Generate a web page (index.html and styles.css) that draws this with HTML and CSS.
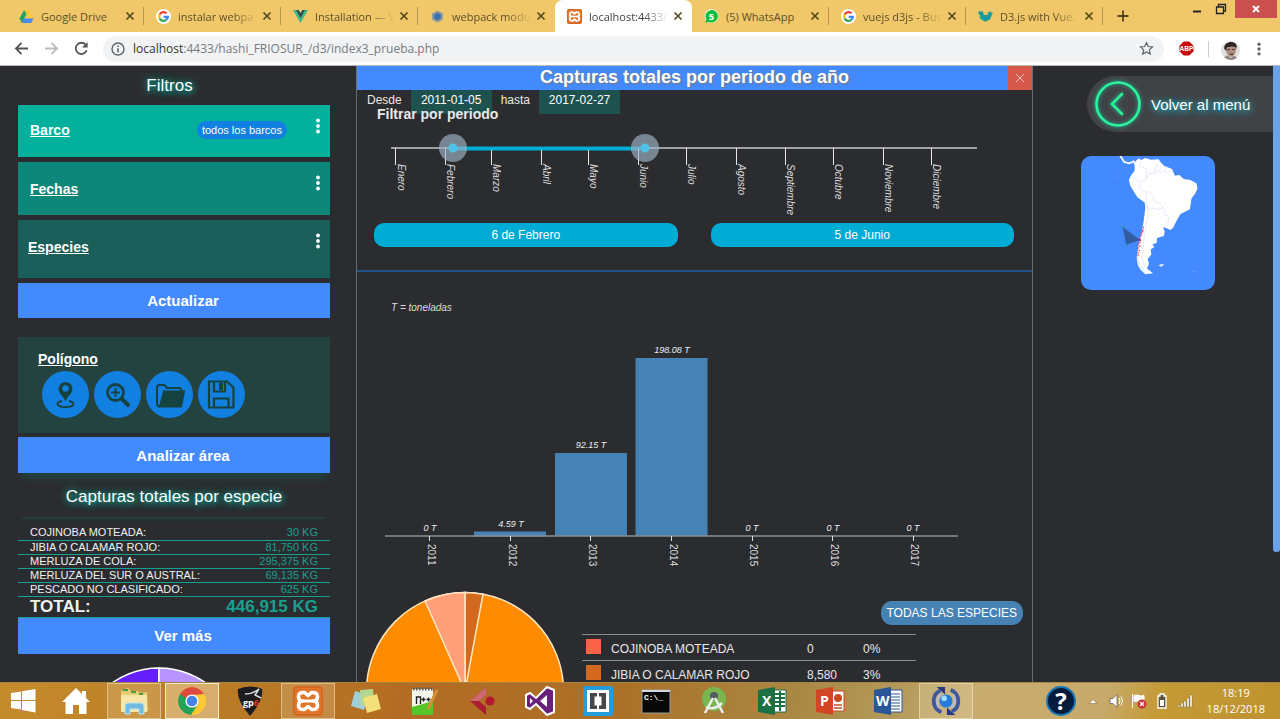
FILE: index.html
```html
<!DOCTYPE html>
<html lang="es">
<head>
<meta charset="utf-8">
<title>localhost:4433/hashi_FRIOSUR_/d3/index3_prueba.php</title>
<link rel="stylesheet" href="styles.css">
</head>
<body>
<svg class="defs" width="0" height="0" aria-hidden="true">
  <symbol id="x" viewBox="0 0 10 10"><path d="M1.500 1.500 8.500 8.500M8.500 1.500 1.500 8.500" stroke="currentColor" stroke-width="1.700"/></symbol>
  <symbol id="google" viewBox="0 0 16 16"><circle cx="8" cy="8" r="8" fill="#fff"/><g fill="none" stroke-width="2.400"><path d="M11.300 4.600A4.700 4.700 0 0 0 3.900 5.700" stroke="#ea4335"/><path d="M3.900 5.700a4.700 4.700 0 0 0 0 4.600" stroke="#fbbc05"/><path d="M3.900 10.300a4.700 4.700 0 0 0 7 1.400" stroke="#34a853"/><path d="M10.900 11.700A4.700 4.700 0 0 0 12.700 8.300H8.200" stroke="#4285f4"/></g></symbol>
  <symbol id="xampp" viewBox="0 0 30 30"><rect x="0" y="0" width="30" height="30" rx="4" fill="#e0762c"/><rect x="1" y="1" width="28" height="28" rx="3" fill="none" stroke="#c75c16"/><g fill="none" stroke="#fff" stroke-width="3.600" stroke-linejoin="round"><path d="M11.500 6.500Q5.500 6 5.500 10.500T9.500 15Q5.500 15 5.500 19.500T11.500 23.500L15 20.500 18.500 23.500Q24.500 24 24.500 19.500T20.500 15Q24.500 15 24.500 10.500T18.500 6.500L15 9.500z"/><path d="M10 15h10" stroke-width="3"/></g></symbol>
  <symbol id="dots" viewBox="0 0 4 16"><g fill="currentColor"><circle cx="2" cy="2.500" r="1.900"/><circle cx="2" cy="8" r="1.900"/><circle cx="2" cy="13.500" r="1.900"/></g></symbol>
</svg>

<header class="browser">
  <div class="tabstrip">
    <nav class="tabs" aria-label="Pestañas">
      <div class="tab"><svg class="fav" viewBox="0 0 16 16"><path d="M5.500 1h5l5 9h-5z" fill="#fbc734"/><path d="M5.500 1 8 5.500 3 15 .5 10z" fill="#1da462"/><path d="M5.500 10h10L13 15H3z" fill="#4688f4"/></svg><a class="tab-title" href="#">Google Drive</a><button class="tab-x" aria-label="Cerrar"><svg><use href="#x"/></svg></button></div>
      <div class="tab"><svg class="fav"><use href="#google"/></svg><a class="tab-title fade" href="#">instalar webpa</a><button class="tab-x" aria-label="Cerrar"><svg><use href="#x"/></svg></button></div>
      <div class="tab"><svg class="fav" viewBox="0 0 16 16"><path d="M0 1h6l2 3.500L10 1h6L8 15z" fill="#41b883"/><path d="M3.200 1H6l2 3.500L10 1h2.800L8 9.500z" fill="#35495e"/></svg><a class="tab-title fade" href="#">Installation — V</a><button class="tab-x" aria-label="Cerrar"><svg><use href="#x"/></svg></button></div>
      <div class="tab"><svg class="fav" viewBox="0 0 16 16"><path d="m8 1.500 5.800 3.200v6.600L8 14.500l-5.800-3.200V4.700z" fill="#8a9a9c"/><path d="m8 4 3.500 2v4L8 12l-3.500-2V6z" fill="#3a72b0"/></svg><a class="tab-title fade" href="#">webpack modu</a><button class="tab-x" aria-label="Cerrar"><svg><use href="#x"/></svg></button></div>
      <div class="tab active"><svg class="fav"><use href="#xampp"/></svg><a class="tab-title fade" href="#">localhost:4433/</a><button class="tab-x" aria-label="Cerrar"><svg><use href="#x"/></svg></button></div>
      <div class="tab"><svg class="fav" viewBox="0 0 16 16"><circle cx="8" cy="7.500" r="7.500" fill="#e8f3dc"/><path d="M1.500 15 2.500 11A6.600 6.600 0 1 1 5 13.500z" fill="#0bbf3c"/><text class="fav-num" x="8" y="11.500">5</text></svg><a class="tab-title" href="#">(5) WhatsApp</a><button class="tab-x" aria-label="Cerrar"><svg><use href="#x"/></svg></button></div>
      <div class="tab"><svg class="fav"><use href="#google"/></svg><a class="tab-title fade" href="#">vuejs d3js - Bus</a><button class="tab-x" aria-label="Cerrar"><svg><use href="#x"/></svg></button></div>
      <div class="tab"><svg class="fav" viewBox="0 0 16 16"><path d="M0 3l2.500-.5L5 2.500l1.500 4 3.500 0 1-3 2-1 1.500 1.500L16 4l-1.500 3L13 11l-5 2.500L3 11 1 8l2 .3L1 5.500z" fill="#1c9c9c"/></svg><a class="tab-title fade" href="#">D3.js with Vue.</a><button class="tab-x" aria-label="Cerrar"><svg><use href="#x"/></svg></button></div>
    </nav>
    <button class="new-tab" aria-label="Nueva pestaña"><svg viewBox="0 0 12 12"><path d="M6 .5v11M.5 6h11" stroke="#54481f" stroke-width="1.800"/></svg></button>
    <div class="window-buttons">
      <button aria-label="Minimizar"><svg viewBox="0 0 12 12"><path d="M2 8.500h8" stroke="#222" stroke-width="2"/></svg></button>
      <button aria-label="Restaurar"><svg viewBox="0 0 12 12"><path d="M1.500 4h7v6.500h-7zM3.500 3.500v-2h7v6.500H9" fill="none" stroke="#222" stroke-width="1.300"/></svg></button>
      <button class="win-close" aria-label="Cerrar ventana"><svg viewBox="0 0 12 12"><path d="m3 3 6 6M9 3 3 9" stroke="#fff" stroke-width="1.800"/></svg></button>
    </div>
  </div>
  <div class="toolbar">
    <button aria-label="Atrás"><svg viewBox="0 0 16 16"><path d="M15 8H2M8 2 2 8l6 6" fill="none" stroke="#555" stroke-width="1.900"/></svg></button>
    <button aria-label="Adelante"><svg viewBox="0 0 16 16"><path d="M1 8h13M8 2l6 6-6 6" fill="none" stroke="#bbb" stroke-width="1.900"/></svg></button>
    <button aria-label="Recargar"><svg viewBox="0 0 16 16"><path d="M13.500 10A6 6 0 1 1 12.500 4" fill="none" stroke="#555" stroke-width="1.900"/><path d="M14.500 1v6h-6z" fill="#555"/></svg></button>
    <div class="address">
      <svg viewBox="0 0 14 14"><circle cx="7" cy="7" r="6" fill="none" stroke="#5f6368" stroke-width="1.400"/><path d="M7 6.200v4.200M7 3.600v1.500" stroke="#5f6368" stroke-width="1.500"/></svg>
      <span class="url" role="textbox" aria-label="Dirección">localhost<span class="path">:4433/hashi_FRIOSUR_/d3/index3_prueba.php</span></span>
      <svg class="star" viewBox="0 0 16 16"><path d="m8 1.800 1.900 4.100 4.500.5L11 9.500l1 4.500-4-2.300L4 14l1-4.500L1.600 6.400l4.500-.5z" fill="none" stroke="#5f6368" stroke-width="1.300"/></svg>
    </div>
    <button class="abp" aria-label="Adblock Plus"><svg viewBox="0 0 16 16"><path d="M5 .5h6L15.500 5v6L11 15.500H5L.5 11V5z" fill="#c70d0c"/><text class="abp-text" x="8" y="10.500">ABP</text></svg></button>
    <button class="avatar" aria-label="Perfil"><svg viewBox="0 0 18 18"><circle cx="9" cy="9" r="9" fill="#e3dfdd"/><path d="M3 7C3 0 14-1 15 5l-1 4-1-3-7 0-1 4z" fill="#2d2526"/><path d="M5 7l5-2 4 1v5l-3 4H8l-3-4z" fill="#b08d80"/><path d="M6 8h2.500m2 0H13M8 12.500h4" stroke="#3b2f2f"/><path d="M3 15.500l3-2 3 2.500 4-2 2 2q-6 4-12-.500z" fill="#8d8382"/></svg></button>
    <button class="more" aria-label="Menú"><svg><use href="#dots"/></svg></button>
  </div>
</header>

<main class="page">
  <aside class="sidebar">
    <h2 class="side-title filters-title">Filtros</h2>
    <section class="filters">
      <div class="filter boat"><a href="#">Barco</a><span class="badge">todos los barcos</span><button aria-label="Opciones de barco"><svg><use href="#dots"/></svg></button></div>
      <div class="filter dates"><a href="#">Fechas</a><button aria-label="Opciones de fechas"><svg><use href="#dots"/></svg></button></div>
      <div class="filter species"><a href="#">Especies</a><button aria-label="Opciones de especies"><svg><use href="#dots"/></svg></button></div>
      <button class="action">Actualizar</button>
    </section>
    <section class="area">
      <div class="polygon">
        <a href="#">Polígono</a>
        <div class="tools">
          <button aria-label="Marcar"><svg viewBox="0 0 47 47"><path d="M23.500 11a7 7 0 0 1 7 7c0 4-4.500 7-7 12-2.500-5-7-8-7-12a7 7 0 0 1 7-7z" fill="#16423f"/><circle cx="23.500" cy="17.500" r="3.200" fill="#1280e0"/><path d="M20 30c-7 1.500-6 6 3.500 6s10.500-4.500 3.500-6" fill="none" stroke="#16423f" stroke-width="2"/></svg></button>
          <button aria-label="Acercar"><svg viewBox="0 0 47 47" fill="none" stroke="#16423f"><circle cx="21.500" cy="21.500" r="8" stroke-width="2.800"/><path d="M21.500 17v9M17 21.500h9" stroke-width="2"/><path d="m28 28 6 6" stroke-width="4" stroke-linecap="round"/></svg></button>
          <button aria-label="Abrir"><svg viewBox="0 0 47 47" fill="none" stroke="#16423f" stroke-width="2"><path d="M14 35.500q-3 0-3-3v-16q0-2.500 2.500-2.500h5l2.500 3h12q2.500 0 2.500 3v1"/><path d="M18 20.500h20l-3 15H14z" fill="#16423f"/></svg></button>
          <button aria-label="Guardar"><svg viewBox="0 0 47 47" fill="none" stroke="#16423f" stroke-width="2.200"><path d="M11 10.500h18l6.500 6V36.500H11zM16 10.500v10h11v-10M16 36.500v-9h14.500v9"/><path d="M21 12h4v7h-4z" fill="#16423f" stroke="none"/></svg></button>
        </div>
      </div>
      <button class="action">Analizar área</button>
    </section>
    <h2 class="side-title totals-title">Capturas totales por especie</h2>
    <table class="totals">
      <tbody>
        <tr><th scope="row">COJINOBA MOTEADA:</th><td>30 KG</td></tr>
        <tr><th scope="row">JIBIA O CALAMAR ROJO:</th><td>81,750 KG</td></tr>
        <tr><th scope="row">MERLUZA DE COLA:</th><td>295,375 KG</td></tr>
        <tr><th scope="row">MERLUZA DEL SUR O AUSTRAL:</th><td>69,135 KG</td></tr>
        <tr><th scope="row">PESCADO NO CLASIFICADO:</th><td>625 KG</td></tr>
      </tbody>
      <tfoot><tr><th scope="row">TOTAL:</th><td>446,915 KG</td></tr></tfoot>
    </table>
    <button class="action">Ver más</button>
    <svg class="mini-pie" viewBox="0 0 164 164"><g stroke="#fff" stroke-width="1.500"><path d="M82 82V1a81 81 0 0 0 0 162z" fill="#651fff"/><path d="M82 82V1a81 81 0 0 1 0 162z" fill="#b794ff"/></g></svg>
  </aside>

  <section class="panel">
    <header class="panel-head"><h1>Capturas totales por periodo de año</h1><button aria-label="Cerrar panel"><svg viewBox="0 0 12 12"><path d="m1 1 10 10M11 1 1 11" stroke="#f3d7d3" stroke-width="1"/></svg></button></header>
    <div class="range-dates">
      <label for="from">Desde</label><input id="from" type="text" value="2011-01-05">
      <label for="to">hasta</label><input id="to" type="text" value="2017-02-27">
    </div>
    <h3 class="period-title">Filtrar por periodo</h3>
    <div class="slider">
      <svg class="months" viewBox="0 0 675 95">
        <path d="M34 24h586" stroke="#9d9fa1" stroke-width="2"/>
        <path d="M95 24.500h193" stroke="#00acd4" stroke-width="4"/>
        <path d="M38.500 24v17M88.500 24v17M134.500 26v15M184.500 26v15M231.500 26v15M281.500 24v17M329.500 24v17M379.500 24v17M428.500 24v17M476.500 24v17M526.500 24v17M574.500 24v17" stroke="#e6e6e6" stroke-width="1"/>
        <g class="month-label">
          <text transform="translate(41 40) rotate(90)">Enero</text><text transform="translate(90 40) rotate(90)">Febrero</text><text transform="translate(136 40) rotate(90)">Marzo</text><text transform="translate(186 40) rotate(90)">Abril</text><text transform="translate(233 40) rotate(90)">Mayo</text><text transform="translate(283 40) rotate(90)">Junio</text><text transform="translate(331 40) rotate(90)">Julio</text><text transform="translate(381 40) rotate(90)">Agosto</text><text transform="translate(430 40) rotate(90)">Septiembre</text><text transform="translate(478 40) rotate(90)">Octubre</text><text transform="translate(528 40) rotate(90)">Noviembre</text><text transform="translate(576 40) rotate(90)">Diciembre</text>
        </g>
      </svg>
      <input type="range" min="0" max="1000" value="105" aria-label="Inicio del periodo">
      <input type="range" min="0" max="1000" value="434" aria-label="Fin del periodo">
    </div>
    <div class="period-pills"><output>6 de Febrero</output><output>5 de Junio</output></div>
    <svg class="bars" viewBox="0 0 675 300">
      <text class="unit" x="34" y="39">T = toneladas</text>
      <g fill="#4682b4"><path d="M117 259.500h72v5h-72zM198 181h72v83h-72zM278.500 86h72v178h-72z"/></g>
      <path d="M28 264h573" stroke="#8d8f92" stroke-width="1.500"/>
      <path d="M72.500 264v5M153.500 264v5M233.500 264v5M314.500 264v5M395.500 264v5M475.500 264v5M556.500 264v5" stroke="#e0e0e0"/>
      <g class="bar-value"><text x="73" y="259">0 T</text><text x="154" y="255">4.59 T</text><text x="234" y="176">92.15 T</text><text x="315" y="81">198.08 T</text><text x="395" y="259">0 T</text><text x="476" y="259">0 T</text><text x="556" y="259">0 T</text></g>
      <g class="year"><text transform="translate(71 272) rotate(90)">2011</text><text transform="translate(152 272) rotate(90)">2012</text><text transform="translate(232 272) rotate(90)">2013</text><text transform="translate(313 272) rotate(90)">2014</text><text transform="translate(393 272) rotate(90)">2015</text><text transform="translate(474 272) rotate(90)">2016</text><text transform="translate(554 272) rotate(90)">2017</text></g>
    </svg>
    <div class="breakdown">
      <svg class="pie" viewBox="0 0 200 200"><g stroke="#ffe7c4" stroke-width="1.500"><circle cx="100" cy="100" r="98.500" fill="#ff8c00"/><path d="M100 100V1.500A98.500 98.500 0 0 1 118 3.200z" fill="#d2691e"/><path d="M100 100 60 10A98.500 98.500 0 0 1 100 1.500z" fill="#ffa07a"/></g></svg>
      <div class="legend">
        <button class="all-species">TODAS LAS ESPECIES</button>
        <table>
          <tbody>
            <tr><td><span class="swatch tomato"></span></td><td>COJINOBA MOTEADA</td><td>0</td><td>0%</td></tr>
            <tr><td><span class="swatch chocolate"></span></td><td>JIBIA O CALAMAR ROJO</td><td>8,580</td><td>3%</td></tr>
          </tbody>
        </table>
      </div>
    </div>
  </section>

  <aside class="right">
    <a class="back" href="#"><svg viewBox="0 0 56 56" fill="none" stroke="#2bf39b" stroke-width="2.600"><circle cx="31" cy="28" r="21.500"/><path d="m35 18-10 10 10 10" stroke-linecap="round"/></svg>Volver al menú</a>
    <svg class="map" viewBox="153 276 400 400" role="img" aria-label="Mapa de Sudamérica">
      <path d="M268 272l14 22 16 4 12-6 6 10" fill="none" stroke="#fff" stroke-width="5"/>
      <path d="M313 303 316 292 325 283 333 288 345 282 362 287 385 286 392 296 402 306 425 315 433 335 446 333 460 345 480 348 498 358 501 374 492 391 483 402 478 435 462 443 450 449 438 470 428 490 420 497 412 493 398 488 403 502 400 515 380 521 379 535 366 540 372 548 361 555 363 570 352 584 356 598 350 612 368 626 345 629 330 615 322 600 319 580 325 540 334 505 340 470 345 430 343 415 322 400 312 384 300 365 296 348 303 333 313 320z" fill="#fff"/>
      <g fill="none" stroke="#d6d8f5" stroke-width="1.700"><path d="M332 290l-2 17 18 8 2 28-18 10-4 18 20 14 7-4 12 12 4 18 18 8 12 18 2 13 12 8-2 13-14 17-3 10"/><path d="M346 343l10-14 18-2 1-17 10-10M376 320l14 4 12-3 10 6 12-10M390 305l-2 15M408 307l-4 13M300 337l17 8 13 8M347 385l1 35 10 16 14-4 17 4 10-10M350 425l5 22-8 35-8 60-4 40 8 25"/></g>
      <path d="M340 487l-3 9 3 5-8 3 3 7-7 8 4 12-8 6 5 8-6 6 4 8-5 8 3 9" fill="none" stroke="#f05262" stroke-width="4" stroke-dasharray="5 3"/>
      <path d="M321 575l4 18 7 14 10 13" fill="none" stroke="#8db3fa" stroke-width="2" stroke-dasharray="3 2"/>
      <path d="M277 487 329 527 288 541z" fill="#315da0"/><path d="M276 486l4 4M287 539l4 4" stroke="#1aa64f" stroke-width="4"/><circle cx="327" cy="526" r="4" fill="#7b3bb0"/>
      <path d="M385 603l7-4 9 1-8 6zM488 620l8 2" fill="#fff" stroke="#b8d0ff"/><circle cx="252" cy="336" r="2" fill="#8db6ff"/>
    </svg>
  </aside>
  <div class="scrollbar"></div>
</main>

<footer class="taskbar">
  <button class="start" aria-label="Inicio"><svg viewBox="0 0 26 26"><path d="M1 5l10-1.500V12H1zM12 3.300 25.500 1v11H12zM1 13h10v8.500L1 20zM12 13h13.500v11.500L12 22z" fill="#fff"/></svg></button>
  <button aria-label="Carpeta personal"><svg viewBox="0 0 30 30"><path d="M15 2 1 16h3.500v12H12v-9h6v9h7.500V16H29l-4-4V5h-4v3z" fill="#fff"/></svg></button>
  <button class="open" aria-label="Explorador"><svg viewBox="0 0 30 30"><path d="M2 5l7-3 3 3 6 0 4 2 6-1 1 19H2z" fill="#e9cd72"/><path d="M2 9h26v17H2z" fill="#f7e6a5"/><path d="M4 4h5M12 6h5M20 8h4" stroke="#4a9b49" stroke-width="2"/><path d="M6 28v-8q0-3 3-3h13q3 0 3 3v8h-5v-5h-9v5z" fill="#70bce0" stroke="#b9e6f5"/></svg></button>
  <button class="open current" aria-label="Chrome"><svg viewBox="0 0 30 30"><circle cx="15" cy="15" r="14" fill="#fbc934"/><path d="M15 15 2.900 8A14 14 0 0 1 27.100 8H15z" fill="#dd4b3e"/><path d="M15 15 2.900 8A14 14 0 0 0 14 29l7-11z" fill="#25a15a"/><path d="M2.900 8 9 18l6-10z" fill="#25a15a"/><path d="M2.900 8h24.200L15 9 9 12z" fill="#dd4b3e"/><circle cx="15" cy="15" r="6.600" fill="#fff"/><circle cx="15" cy="15" r="5.300" fill="#4285e8"/></svg></button>
  <button aria-label="Guitar Pro"><svg viewBox="0 0 30 30"><path d="M3 3Q15-2 27 3q2 11-12 27Q1 14 3 3z" fill="#1d1c20"/><path d="M10 8q8 0 14-5l-4 6 6 3" fill="none" stroke="#d8d8d8" stroke-width="1.500"/><text class="gp" x="8" y="20">gp<tspan fill="#e63a2c">6</tspan></text></svg></button>
  <button class="open" aria-label="XAMPP"><svg><use href="#xampp"/></svg></button>
  <button aria-label="Notas"><svg viewBox="0 0 30 30"><path d="M4 5l13 4-4 15-13-4z" fill="#9dd0d8"/><path d="M9 4l13-1 1 15-13 2z" fill="#b4d891"/><path d="M12 12l14-4 4 15-14 4z" fill="#f5df79"/></svg></button>
  <button aria-label="Notepad++"><svg viewBox="0 0 30 30"><path d="M3 3h21v26H3z" fill="#f5f7ee"/><path d="M3 21l21-6v14H3z" fill="#55c52a"/><path d="M4 3h20" stroke="#555" stroke-width="3" stroke-dasharray="1.500 1.500"/><path d="M7.500 18v-7h4v7M12.500 13.500h4M14.500 11.500v4M17.500 13.500h4M19.500 11.500v4" fill="none" stroke="#222" stroke-width="1.400"/><path d="M19 23 28 4" stroke="#d29332" stroke-width="3"/></svg></button>
  <button aria-label="Cubase"><svg viewBox="0 0 30 30"><path d="M19 1 3 15l16 14v-8l-7-6 7-6z" fill="#a91e32"/><path d="M19 1v8l-7 6H3z" fill="#cf6970"/><circle cx="23" cy="15" r="4.500" fill="#b3192c"/></svg></button>
  <button aria-label="Visual Studio"><svg viewBox="0 0 30 30"><path d="M1 9l4-2 6 5L22 1l7 3v22l-7 3L11 18l-6 5-4-2z" fill="#68217a" stroke="#fff" stroke-width="2"/><path d="M5 12v6l3-3zM15 15l7-6v12z" fill="#fff"/></svg></button>
  <button aria-label="Brackets"><svg viewBox="0 0 30 30"><rect x="0" y="0" width="30" height="30" rx="2" fill="#239ddd"/><path d="M4 4h22v22H4z" fill="#fff"/><path d="M14 7H7v16h7v-3.500h-2.500v-9H14zM16 7h7v16h-7v-3.500h2.500v-9H16z" fill="#474747"/></svg></button>
  <button aria-label="Consola"><svg viewBox="0 0 30 30"><path d="M1 4h28v23H1z" fill="#080808" stroke="#999"/><path d="M1 5h28" stroke="#d3d7e0" stroke-width="2"/><text class="cmd" x="3" y="14">C:\_</text></svg></button>
  <button aria-label="Android Studio"><svg viewBox="0 0 30 30"><circle cx="15" cy="13" r="12" fill="#79b650"/><circle cx="15" cy="10" r="4" fill="#4f5d60"/><path d="M14 12 6 27M16 12l8 15M7 21q8 4 16-4" fill="none" stroke="#eee" stroke-width="2.500"/></svg></button>
  <button aria-label="Excel"><svg viewBox="0 0 30 30"><path d="M15 4h14v22H15z" fill="#fff" stroke="#1d7044"/><path d="M18 8h10M18 12h10M18 16h10M18 20h10M23 5v20" stroke="#1d7044" stroke-width="2"/><path d="M1 4 18 1v28L1 26z" fill="#1d7044"/><text class="office" x="5" y="20">X</text></svg></button>
  <button aria-label="PowerPoint"><svg viewBox="0 0 30 30"><path d="M15 5h14v20H15z" fill="#fff" stroke="#d24625"/><path d="M19 19h8M19 22h8" stroke="#d24625" stroke-width="1.500"/><circle cx="23" cy="12" r="4" fill="#d24625"/><path d="M1 4 18 1v28L1 26z" fill="#d24625"/><text class="office" x="5" y="20">P</text></svg></button>
  <button aria-label="Word"><svg viewBox="0 0 30 30"><path d="M15 4h14v22H15z" fill="#fff" stroke="#2a5699"/><path d="M18 8h9M18 11h9M18 14h9M18 17h9M18 20h9M18 23h9" stroke="#2a5699"/><path d="M1 4 18 1v28L1 26z" fill="#2a5699"/><text class="office" x="3" y="20">W</text></svg></button>
  <button class="open" aria-label="Sincronizar"><svg viewBox="0 0 32 32"><circle cx="16" cy="16" r="7" fill="#247bdc"/><circle cx="14" cy="13" r="3" fill="#9fdcff"/><path d="M11 28Q2 24 3 14 4 7 10 5" fill="none" stroke="#3f579c" stroke-width="4"/><path d="M6 1h9v8zM26 31h-9v-8z" fill="#283b82"/><path d="M21 4q9 4 8 14-1 7-7 9" fill="none" stroke="#3f579c" stroke-width="4"/><path d="M8 23q-4-8 3-15M24 9q4 8-3 15" fill="none" stroke="#aebde4" stroke-width="2"/></svg></button>
  <div class="tray">
    <button class="help" aria-label="Ayuda"><svg viewBox="0 0 30 30"><circle cx="15" cy="15" r="14" fill="#071b3d" stroke="#1478b9" stroke-width="2"/><text class="help-mark" x="15" y="24">?</text></svg></button>
    <button aria-label="Mostrar iconos ocultos"><svg viewBox="0 0 16 16"><path d="M4 10.500 8 6.500l4 4z" fill="#fff" stroke="#71603d" stroke-width=".5"/></svg></button>
    <button aria-label="Volumen"><svg viewBox="0 0 16 16"><path d="M2 5.500h3L9 1.500v13l-4-4H2z" fill="#fff" stroke="#555" stroke-width=".7"/><path d="M11 5q2 3 0 6M13 3.500q3 4.500 0 9" fill="none" stroke="#fff"/></svg></button>
    <button aria-label="Red"><svg viewBox="0 0 16 16"><path d="M1.500 1v14M3 2.500q4-1 5 0t5 0v6q-4 1-5 0t-5 0z" fill="#fff" stroke="#fff"/><circle cx="11" cy="11" r="4.500" fill="#cd2f36"/><path d="m9 9 4 4M13 9l-4 4" stroke="#fff" stroke-width="1.300"/></svg></button>
    <button aria-label="Batería"><svg viewBox="0 0 16 16"><path d="M4 3h2V1h4v2h2v12H4z" fill="#5c5439" stroke="#fff" stroke-width="1.300"/><path d="M6 7h4v6H6z" fill="#fff"/></svg></button>
    <button aria-label="Señal"><svg viewBox="0 0 16 16"><path d="M1 12h2v2H1zM4 10h2v4H4zM7 8h2v6H7zM10 5h2v9h-2zM13 2h2v12h-2z" fill="#fff" stroke="#6b5b36" stroke-width=".4"/></svg></button>
    <time class="clock" datetime="2018-12-18T18:19"><span>18:19</span><span>18/12/2018</span></time>
  </div>
</footer>
</body>
</html>
```
FILE: styles.css
```css
* { box-sizing: border-box; }
html, body { height: 100%; }
body { margin: 0; display: flex; flex-direction: column; overflow: hidden; background: #2b2c2f; color: #e8e8e8; font: 12px "Liberation Sans", Arial, sans-serif; }
button { border: 0; padding: 0; background: none; color: inherit; font: inherit; display: grid; place-items: center; cursor: pointer; }
h1, h2, h3 { margin: 0; }
a { color: inherit; }
svg { display: block; }
.defs { position: absolute; }

/* browser window */
.browser { flex: none; font-family: "Open Sans", sans-serif; border-bottom: 1px solid #b9b9b9; background: #fff; }
.tabstrip { display: flex; height: 32px; background: #f0c869; color: #5d4f2c; }
.tabs { display: flex; flex: 1; max-width: 1103px; padding-left: 7px; }
.tab { flex: 1 1 0; min-width: 0; display: flex; align-items: center; padding: 0 9px 0 12px; position: relative; }
.tab::after { content: ""; position: absolute; right: 0; top: 7px; height: 18px; border-right: 1px solid #b39650; }
.tab.active { background: #fff; color: #444; border-radius: 8px 8px 0 0; }
.tab.active::after, .tab:has(+ .active)::after { display: none; }
.fav { flex: none; width: 15px; height: 15px; }
.fav-num { font: bold 10px "Open Sans", sans-serif; fill: #fff; text-anchor: middle; }
.tab-title { flex: 1; margin-left: 7px; white-space: nowrap; text-decoration: none; font-size: 11px; }
.fade { mask-image: linear-gradient(90deg, #000 65%, transparent 95%); }
.tab-x { flex: none; width: 10px; height: 10px; color: #54481f; }
.tab-x svg { width: 10px; height: 10px; }
.new-tab { width: 40px; }
.new-tab svg { width: 12px; height: 12px; }
.window-buttons { display: flex; align-items: flex-start; margin-left: auto; padding-right: 3px; }
.window-buttons button { width: 24px; height: 18px; }
.window-buttons svg { width: 12px; height: 12px; }
.window-buttons .win-close { width: 42px; background: #c9504f; margin-left: 2px; }
.toolbar { display: flex; align-items: center; height: 33px; padding: 0 15px 0 13px; gap: 14px; }
.toolbar > button { width: 16px; height: 16px; }
.toolbar > button svg { width: 15px; height: 15px; }
.address { flex: 1; display: flex; align-items: center; height: 26px; border-radius: 13px; background: #f1f3f4; padding: 0 10px 0 8px; gap: 8px; }
.address svg { width: 14px; height: 14px; flex: none; }
.address .star { width: 15px; height: 15px; }
.url { flex: 1; font-size: 12px; color: #333; }
.path { color: #777b80; }
.abp-text { font: bold 7px "Liberation Sans", sans-serif; fill: #fff; text-anchor: middle; }
.toolbar .avatar { width: 35px; border-left: 1px solid #ccc; padding-left: 8px; }
.toolbar .avatar svg { width: 19px; height: 19px; }
.toolbar .more { width: 12px; color: #5f6368; margin-left: -4px; }
.toolbar .more svg { width: 4px; height: 14px; }

/* page */
.page { flex: 1; min-height: 0; display: grid; grid-template-columns: 356fr 677fr 240fr 7px; overflow: hidden; }
.sidebar { padding: 0 26px 0 18px; min-width: 0; }
.side-title { font-size: 17px; font-weight: normal; text-align: center; color: #fff; text-shadow: 0 0 8px #14c7b0, 2px 2px 6px #0d8a7c; }
.filters-title { line-height: 39px; padding-right: 9px; }
.filters { display: flex; flex-direction: column; gap: 5px; }
.filter { display: flex; align-items: center; height: 53px; padding: 0 10px 0 12px; color: #fff; }
.filter a, .polygon a { font-size: 14px; font-weight: bold; color: #fff; }
.filter button { width: 4px; height: 16px; margin: 13px 0 0 auto; align-self: flex-start; }
.filter button svg { width: 4px; height: 16px; }
.boat { background: #02b09c; height: 52px; padding-bottom: 3px; }
.dates { background: #0c877a; }
.species { background: #1a5f5a; height: 58px; padding: 0 10px 4px; }
.badge { margin-left: auto; padding: 0 5px; line-height: 18px; border-radius: 9px; background: #1280e0; font-size: 11px; }
.filter .badge + button { margin-left: 29px; }
.action { display: block; width: 100%; height: 36px; padding-left: 18px; background: #448aff; color: #fff; font-size: 15px; font-weight: bold; }
.filters .action { height: 35px; }
.area { display: flex; flex-direction: column; gap: 4px; margin-top: 19px; }
.area .action { box-shadow: 0 9px 8px -4px #1f4643; }
.polygon { background: #234341; padding: 14px 20px; height: 96px; }
.polygon a { display: block; line-height: 17px; }
.tools { display: flex; gap: 5px; padding: 3px 0 0 4px; }
.tools button { width: 47px; height: 47px; border-radius: 50%; background: #1280e0; }
.tools svg { width: 47px; height: 47px; }
.totals-title { margin-top: 4px; line-height: 40px; box-shadow: 0 5px 5px -4px #1d4f4a; }
.totals { width: 100%; margin-top: 9px; border-collapse: collapse; color: #18a08f; white-space: nowrap; }
.totals th, .totals td { height: 14px; padding: 0 12px; line-height: 13px; border-bottom: 1px solid #16a08e; text-align: right; font-size: 11px; }
.totals th { font-weight: normal; text-align: left; color: #f2f2f2; }
.totals tfoot th, .totals tfoot td { height: 21px; line-height: 20px; font-size: 17px; font-weight: bold; }
.mini-pie { width: 164px; height: 164px; margin: 13px 0 0 59px; }

.panel { min-width: 0; border: solid #6b6c6f; border-width: 0 1px; }
.panel-head { display: flex; height: 24px; background: #448aff; }
.panel-head h1 { flex: 1; padding-left: 24px; font-size: 18px; line-height: 22px; text-align: center; color: #fff; text-shadow: 1px 1px 2px #777; }
.panel-head button { width: 24px; background: #d5584a; }
.panel-head svg { width: 10px; height: 10px; }
.range-dates { display: flex; height: 24px; padding-left: 10px; gap: 9px; line-height: 20px; }
.range-dates input { width: 81px; height: 24px; padding: 0 0 4px; border: 0; background: #1e524e; color: #fff; font: 12px "Liberation Sans", Arial, sans-serif; text-align: center; }
.period-title { position: relative; margin-top: -8px; padding-left: 20px; font-size: 14px; line-height: 17px; }
.slider { position: relative; margin-top: 1px; }
.months { width: 100%; height: auto; }
.month-label { font: italic 10px "Liberation Sans", Arial, sans-serif; fill: #ddd; }
.slider input { position: absolute; left: 20px; top: 10px; width: calc(100% - 61px); height: 28px; margin: 0; appearance: none; background: none; pointer-events: none; }
.slider input::-webkit-slider-thumb { appearance: none; width: 28px; height: 28px; border-radius: 50%; background: radial-gradient(circle, #4fc4ea 0 4px, rgba(160, 180, 200, .65) 5px); pointer-events: auto; }
.period-pills { display: flex; gap: 33px; padding: 4px 18px 23px 17px; border-bottom: 2px solid #20518a; }
.period-pills output { flex: 1; line-height: 24px; border-radius: 10px; background: #00acd4; color: #fff; text-align: center; }
.bars { width: 100%; height: auto; }
.unit { font: italic 10px "Liberation Sans", Arial, sans-serif; fill: #ddd; }
.bar-value { font: italic 9px "Liberation Sans", Arial, sans-serif; fill: #eee; text-anchor: middle; }
.year { font: 10px "Liberation Sans", Arial, sans-serif; fill: #ddd; }
.breakdown { display: flex; padding: 19px 9px 0 8px; }
.pie { flex: none; width: 200px; height: 200px; }
.legend { flex: 1; padding-left: 17px; display: flex; flex-direction: column; align-items: flex-start; }
.all-species { align-self: flex-end; margin-top: 10px; height: 24px; padding: 0 6px; border-radius: 11px; background: #4682b4; color: #fff; font-size: 12px; }
.legend table { width: 334px; margin-top: 9px; border-collapse: collapse; font-size: 12px; }
.legend td { height: 26px; padding: 3px 0 0; border-top: 1px solid #8b8c8f; }
.legend td:first-child { width: 29px; padding: 0 4px 2px; }
.legend td:nth-child(3) { width: 56px; }
.legend td:last-child { width: 53px; }
.swatch { display: block; width: 15px; height: 15px; }
.tomato { background: #ff6347; }
.chocolate { background: #d2691e; }

.right { min-width: 0; padding: 10px 0 0 48px; }
.back { display: flex; align-items: center; gap: 8px; height: 56px; margin-left: 6px; border-radius: 28px 0 0 28px; background: #414245; color: #fff; font-size: 15px; text-decoration: none; text-shadow: 0 0 6px #1fb6c8, 1px 2px 8px #1fb6c8; }
.back svg { width: 56px; height: 56px; filter: drop-shadow(0 0 2px #17c0a0); }
.map { width: 134px; height: 134px; margin-top: 24px; border-radius: 10px; background: #448aff; }
.scrollbar { height: 486px; background: #6ba3ea; border-radius: 0 0 3px 3px; }

/* taskbar */
.taskbar { flex: none; display: flex; gap: 4px; height: 37px; border-top: 1px solid #a78745; background: linear-gradient(105deg, #c58c2c 0, #b97b26 18%, #b36c23 32%, #ac7027 48%, #a98843 62%, #b39a5b 70%, #c8ac70 76%, #c7aa6b 86%, #c59b38 90%, #bd922f 100%); color: #fff; font-family: "Open Sans", sans-serif; }
.taskbar > button { flex: none; width: 54px; height: 36px; }
.taskbar > button svg { width: 30px; height: 30px; }
.taskbar > .start { width: 45px; }
.taskbar > .start svg { width: 26px; height: 26px; }
.taskbar > .open { border: 1px solid rgba(255, 245, 220, .45); background: rgba(255, 240, 210, .2); }
.taskbar > .current { border-color: rgba(255, 245, 220, .85); background: rgba(255, 240, 210, .42); }
.gp { font: bold 9px "Open Sans", sans-serif; fill: #fff; }
.cmd { font: bold 8px "Liberation Mono", monospace; fill: #fff; }
.office { font: bold 14px "Open Sans", sans-serif; fill: #fff; }
.tray { display: flex; align-items: center; gap: 7px; margin-left: auto; padding-right: 15px; }
.tray svg { width: 16px; height: 16px; }
.tray .help svg { width: 30px; height: 30px; }
.tray .help { margin-right: 2px; }
.help-mark { font: bold 24px "Open Sans", sans-serif; fill: #fff; text-anchor: middle; }
.clock { display: flex; flex-direction: column; align-items: center; margin-left: 7px; font-size: 11px; line-height: 16px; }
```
